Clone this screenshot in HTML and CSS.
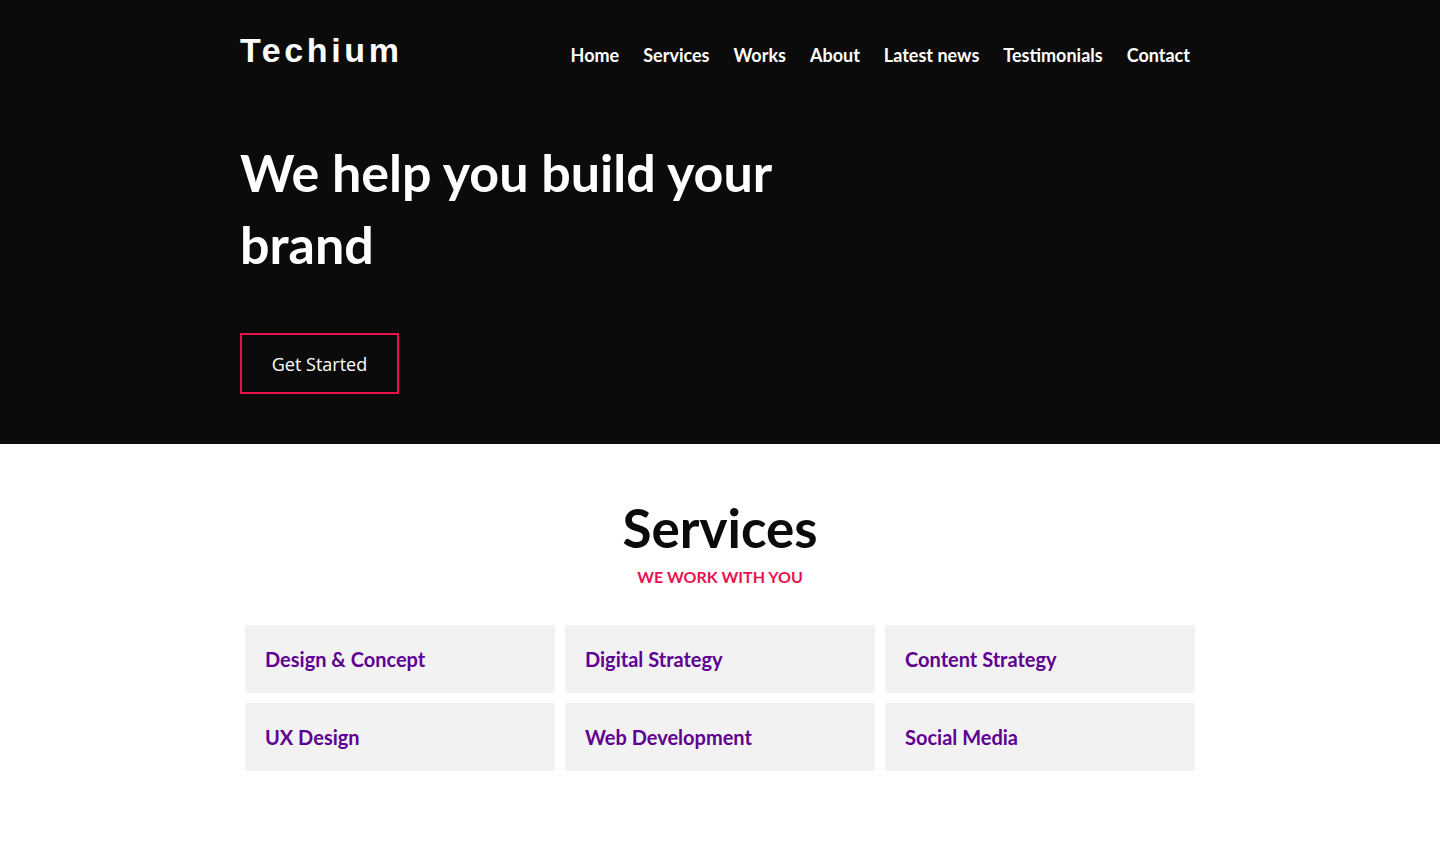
FILE: index.html
```html
<!DOCTYPE html>
<html lang="en">
<head>
<meta charset="utf-8">
<title>Techium</title>
<link rel="stylesheet" href="styles.css">
</head>
<body>
<section class="hero">
  <div class="container">
    <header class="topbar">
      <div class="logo">Techium</div>
      <nav class="nav">
        <a href="#">Home</a>
        <a href="#">Services</a>
        <a href="#">Works</a>
        <a href="#">About</a>
        <a href="#">Latest news</a>
        <a href="#">Testimonials</a>
        <a href="#">Contact</a>
      </nav>
    </header>
    <h1 class="hero-title">We help you build your<br>brand</h1>
    <a href="#" class="btn">Get Started</a>
  </div>
</section>
<section class="services">
  <div class="container">
    <h2 class="section-title">Services</h2>
    <p class="section-sub">WE WORK WITH YOU</p>
    <div class="grid">
      <div class="card">Design &amp; Concept</div>
      <div class="card">Digital Strategy</div>
      <div class="card">Content Strategy</div>
      <div class="card">UX Design</div>
      <div class="card">Web Development</div>
      <div class="card">Social Media</div>
    </div>
  </div>
</section>
</body>
</html>
```
FILE: styles.css
```css
* { box-sizing: border-box; }
body {
  margin: 0;
  font-family: "Lato", "Noto Sans", sans-serif;
  background: #fff;
}
.container {
  width: 960px;
  margin: 0 auto;
}
.hero {
  background: #0b0b0b;
  height: 444px;
  color: #fff;
}
.topbar {
  display: flex;
  justify-content: space-between;
  align-items: flex-start;
  padding-top: 31px;
}
.logo {
  font-family: "Liberation Sans", Arial, sans-serif;
  font-weight: 700;
  font-size: 34px;
  letter-spacing: 3.6px;
  line-height: 38px;
}
.nav {
  display: flex;
  gap: 24px;
  padding-top: 13px;
  padding-right: 10px;
}
.nav a {
  color: #fff;
  text-decoration: none;
  font-weight: 700;
  font-size: 18px;
  line-height: 22px;
}
.hero-title {
  margin: 67px 0 0;
  font-size: 52px;
  line-height: 72px;
  font-weight: 700;
}
.btn {
  display: inline-flex;
  align-items: center;
  justify-content: center;
  margin-top: 53px;
  width: 159px;
  height: 61px;
  border: 2px solid #e8124f;
  color: #fff;
  text-decoration: none;
  font-family: "Open Sans", sans-serif;
  font-size: 18px;
}
.services {
  padding-top: 52px;
}
.section-title {
  margin: 0;
  text-align: center;
  font-size: 53px;
  line-height: 64px;
  font-weight: 700;
  color: #0b0b0b;
}
.section-sub {
  margin: 7px 0 0;
  text-align: center;
  color: #e8124f;
  font-weight: 700;
  font-size: 16px;
  line-height: 20px;
}
.grid {
  display: grid;
  grid-template-columns: repeat(3, 310px);
  gap: 10px;
  justify-content: center;
  margin-top: 38px;
}
.card {
  background: #f2f2f2;
  height: 68px;
  display: flex;
  align-items: center;
  padding-left: 20px;
  color: #5f0093;
  font-weight: 700;
  font-size: 20px;
}
```
